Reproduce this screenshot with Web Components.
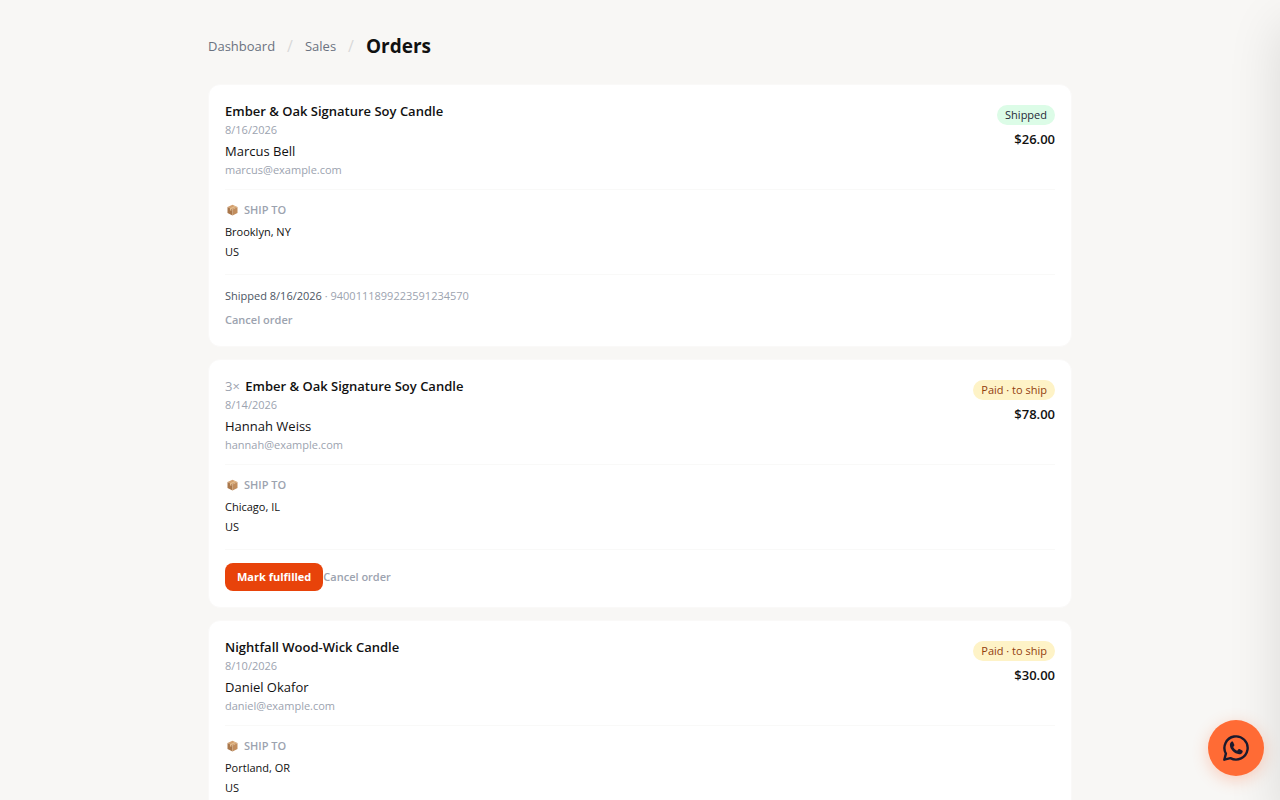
<!DOCTYPE html>
<html lang="en">
<head>
<meta charset="utf-8">
<meta name="viewport" content="width=device-width, initial-scale=1">
<title>Orders</title>
<style>
    body{
        margin: 0;
        background: #f8f7f5;
        color: #111111;
        font-family: "Open Sans", "Noto Sans", sans-serif;
        overflow-x: hidden;
    }
</style>
</head>
<body>
<orders-page>
    <page-crumbs slot="crumbs" current="Orders">
        <a href="#dashboard">Dashboard</a>
        <a href="#sales">Sales</a>
    </page-crumbs>
    <order-card date="8/16/2026" customer="Marcus Bell" email="marcus@example.com" city="Brooklyn, NY" country="US" total="$26.00" status="shipped" shipped="8/16/2026" tracking="9400111899223591234570">Ember &amp; Oak Signature Soy Candle</order-card>
    <order-card qty="3" date="8/14/2026" customer="Hannah Weiss" email="hannah@example.com" city="Chicago, IL" country="US" total="$78.00" status="paid">Ember &amp; Oak Signature Soy Candle</order-card>
    <order-card date="8/10/2026" customer="Daniel Okafor" email="daniel@example.com" city="Portland, OR" country="US" total="$30.00" status="paid">Nightfall Wood-Wick Candle</order-card>
</orders-page>
<side-drawer></side-drawer>
<chat-button></chat-button>

<script>
const define = (name, html, setup) => {
    const tpl = document.createElement('template');
    tpl.innerHTML = html;
    customElements.define(name, class extends HTMLElement{
        constructor(){
            super()
            this.attachShadow({mode: 'open'});
            this.shadowRoot.appendChild(tpl.content.cloneNode(true));
        }

        connectedCallback(){
            if (setup) setup(this, this.shadowRoot);
        }
    });
}

define('orders-page', `
    <style>
        :host{
            display: block;
            max-width: 864px;
            margin: 0 auto;
            padding: 32px 16px;
        }
        main{
            display: flex;
            flex-direction: column;
            gap: 12px;
            margin-top: 24px;
        }
    </style>
    <slot name="crumbs"></slot>
    <main><slot></slot></main>`);

define('page-crumbs', `
    <style>
        :host{ display: block; }
        nav{
            display: flex;
            align-items: center;
            gap: 12px;
            line-height: 28px;
            font-size: 13px;
        }
        ::slotted(a){
            color: #6b7280;
            text-decoration: none;
        }
        .sep{
            color: #d9d9d9;
            font-size: 16px;
        }
        h1{
            margin: 0;
            font-size: 19px;
            font-weight: 700;
        }
    </style>
    <nav aria-label="Breadcrumb"></nav>`, (el, root) => {
        const nav = root.querySelector('nav');
        // one slot per link so a separator can sit between them
        [...el.querySelectorAll('a')].forEach((a, i) => {
            a.slot = 'crumb' + i;
            nav.insertAdjacentHTML('beforeend', `<slot name="crumb${i}"></slot><span class="sep">/</span>`);
        });
        const h1 = document.createElement('h1');
        h1.textContent = el.getAttribute('current');
        nav.appendChild(h1);
    });

define('status-badge', `
    <style>
        :host{
            display: block;
            padding: 0 8px;
            border-radius: 10px;
            font-size: 11px;
            line-height: 20px;
            background: #fef3c7;
            color: #92400e;
        }
        :host([kind="shipped"]){
            background: #dcfce7;
            color: #1f2937;
        }
    </style>
    <slot></slot>`);

define('order-card', `
    <style>
        :host{
            display: block;
            padding: 16px;
            border: 1px solid #faf9f8;
            border-radius: 12px;
            background: #ffffff;
            font-size: 11px;
            line-height: 16px;
        }
        .top{
            display: flex;
            justify-content: space-between;
            line-height: 18px;
        }
        .sum{
            display: flex;
            flex-direction: column;
            align-items: flex-end;
            gap: 4px;
            padding-top: 4px;
        }
        h2, .name, .total{
            margin: 0;
            font-size: 13px;
            line-height: 20px;
            font-weight: 600;
        }
        .name{
            margin-top: 2px;
            font-weight: 400;
        }
        .muted, .qty{
            color: #9ca3af;
            font-weight: 400;
        }
        .qty{ margin-right: 2px; }
        section{
            margin-top: 12px;
            padding-top: 12px;
            border-top: 1px solid #f9f9f8;
        }
        .top + section{ margin-top: 10px; }
        h3{
            display: flex;
            align-items: center;
            gap: 4px;
            margin: 0 0 4px;
            color: #9ca3af;
            font-size: 11px;
            font-weight: 600;
        }
        h3 svg{
            width: 15px;
            height: 12px;
        }
        address{
            font-style: normal;
            line-height: 20px;
        }
        .actions{ padding-top: 13px; }
        .shipped{
            margin-bottom: 6px;
            color: #4b5563;
        }
        .row{ display: flex; }
        button{
            padding: 0;
            border: 0;
            background: none;
            color: #9ca3af;
            font: 600 11px/20px "Open Sans", "Noto Sans", sans-serif;
            cursor: pointer;
        }
        .fulfil{
            padding: 4px 12px;
            border-radius: 8px;
            background: #e8430a;
            color: #ffffff;
            font-weight: 700;
        }
        [hidden]{ display: none; }
    </style>
    <div class="top">
        <div>
            <h2><span class="qty" hidden></span><slot></slot></h2>
            <div class="muted" data-attr="date"></div>
            <div class="name" data-attr="customer"></div>
            <div class="muted" data-attr="email"></div>
        </div>
        <div class="sum">
            <status-badge></status-badge>
            <div class="total" data-attr="total"></div>
        </div>
    </div>
    <section>
        <h3>
            <svg viewBox="0 0 15 12" aria-hidden="true">
                <path fill="#d3a06f" d="M7.500 .8 12.500 3 7.500 5.500 2.500 3z"/>
                <path fill="#a9774b" d="M2.500 3 7.500 5.500V11.400L2.500 8.900z"/>
                <path fill="#c18d5d" d="M12.500 3 7.500 5.500V11.400L12.500 8.900z"/>
                <path fill="#e3bd8e" d="M10 1.900 5 4.300V6.300L6.300 6.900V4.900L11.300 2.500z"/>
            </svg>
            SHIP TO
        </h3>
        <address>
            <div data-attr="city"></div>
            <div data-attr="country"></div>
        </address>
    </section>
    <section class="actions">
        <div class="shipped" hidden>Shipped <span data-attr="shipped"></span> <span class="muted">· <span data-attr="tracking"></span></span></div>
        <div class="row">
            <button type="button" class="fulfil">Mark fulfilled</button>
            <button type="button">Cancel order</button>
        </div>
    </section>`, (el, root) => {
        root.querySelectorAll('[data-attr]').forEach(node => {
            node.textContent = el.getAttribute(node.dataset.attr);
        });
        if (el.hasAttribute('qty')){
            const qty = root.querySelector('.qty');
            qty.textContent = el.getAttribute('qty') + '× ';
            qty.hidden = false;
        }
        const shipped = el.getAttribute('status') == 'shipped';
        const badge = root.querySelector('status-badge');
        badge.setAttribute('kind', el.getAttribute('status'));
        badge.textContent = shipped ? 'Shipped' : 'Paid · to ship';
        root.querySelector('.shipped').hidden = !shipped;
        root.querySelector('.fulfil').hidden = shipped;
    });

// closed drawer, only its shadow reaches into the page
define('side-drawer', `
    <style>
        :host{
            position: fixed;
            top: 0;
            bottom: 0;
            left: 100%;
            width: 320px;
            background: #ffffff;
            box-shadow: 0 25px 50px rgba(0, 0, 0, 0.12);
            pointer-events: none;
        }
    </style>`);

define('chat-button', `
    <style>
        :host{
            position: fixed;
            right: 16px;
            bottom: 24px;
        }
        button{
            display: flex;
            align-items: center;
            justify-content: center;
            width: 56px;
            height: 56px;
            padding: 0;
            border: 0;
            border-radius: 50%;
            background: #ff6b35;
            color: #1a1a2e;
            box-shadow: 0 4px 16px rgba(255, 107, 53, 0.3);
            cursor: pointer;
        }
        svg{
            width: 28px;
            height: 28px;
        }
    </style>
    <button type="button" aria-label="Chat on WhatsApp">
        <svg viewBox="0 0 28 28" aria-hidden="true">
            <path fill="none" stroke="currentColor" stroke-width="2.400" stroke-linejoin="round" d="M2.300 25.700 3.900 19.600A11.600 11.600 0 1 1 8.400 24.100z"/>
            <path fill="currentColor" d="M9.200 8c.5-.5 1.600-.6 1.900 0l1.200 2.700c.2.500 0 .9-.3 1.300l-.8 1c.9 1.700 2.200 2.900 3.900 3.700l1.200-1.300c.3-.4.7-.5 1.200-.3l2.700 1.300c.6.300.6.7.4 1.500-.4 1.500-2 2.400-3.500 2.300-4.700-.5-9.200-5-9.200-9.200 0-1.200.5-2.300 1.300-3z"/>
        </svg>
    </button>`);
</script>
</body>
</html>
